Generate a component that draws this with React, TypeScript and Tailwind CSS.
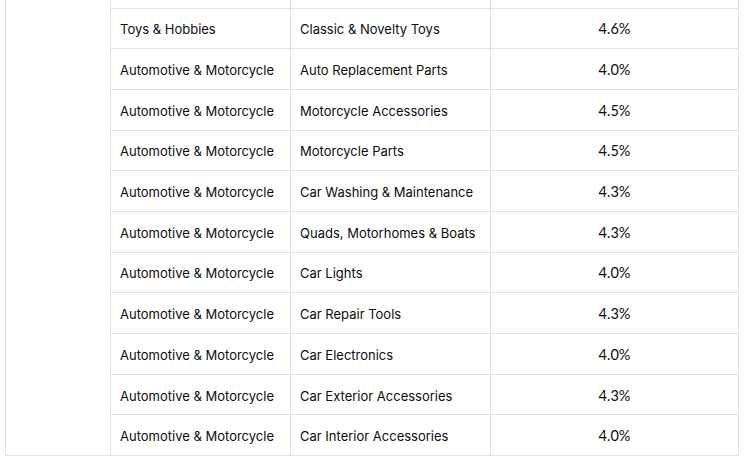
const rows: [string, string, string][] = [
  ['Toys & Hobbies', 'Classic & Novelty Toys', '4.6%'],
  ['Automotive & Motorcycle', 'Auto Replacement Parts', '4.0%'],
  ['Automotive & Motorcycle', 'Motorcycle Accessories', '4.5%'],
  ['Automotive & Motorcycle', 'Motorcycle Parts', '4.5%'],
  ['Automotive & Motorcycle', 'Car Washing & Maintenance', '4.3%'],
  ['Automotive & Motorcycle', 'Quads, Motorhomes & Boats', '4.3%'],
  ['Automotive & Motorcycle', 'Car Lights', '4.0%'],
  ['Automotive & Motorcycle', 'Car Repair Tools', '4.3%'],
  ['Automotive & Motorcycle', 'Car Electronics', '4.0%'],
  ['Automotive & Motorcycle', 'Car Exterior Accessories', '4.3%'],
  ['Automotive & Motorcycle', 'Car Interior Accessories', '4.0%'],
]

export default function App() {
  return (
    <div className="h-[457px] w-[747px] overflow-hidden bg-white pl-[5px] font-['Inter',sans-serif] text-[13px] text-[#0d0d0d]">
      <table className="w-[733px] table-fixed border-collapse">
        <colgroup>
          <col className="w-[105px]" />
          <col className="w-[180px]" />
          <col className="w-[200px]" />
          <col className="w-[248px]" />
        </colgroup>
        <tbody>
          <tr className="h-[8px]">
            <td rowSpan={12} className="border border-t-0 border-[#e3e3e3]" />
            <td className="border border-t-0 border-[#e3e3e3]" />
            <td className="border border-t-0 border-[#e3e3e3]" />
            <td className="border border-t-0 border-[#e3e3e3]" />
          </tr>
          {rows.map(([cat, sub, pct], i) => (
            <tr key={i} className="h-[40.7px]">
              <td className="whitespace-nowrap border border-[#e3e3e3] pl-[9px] pt-[2px] leading-5">{cat}</td>
              <td className="whitespace-nowrap border border-[#e3e3e3] pl-[9px] pt-[2px] leading-5">{sub}</td>
              <td className="border border-[#e3e3e3] px-[10px] pt-[2px] text-center font-['Lato',sans-serif] text-[14.5px] leading-5">
                {pct}
              </td>
            </tr>
          ))}
        </tbody>
      </table>
    </div>
  )
}
